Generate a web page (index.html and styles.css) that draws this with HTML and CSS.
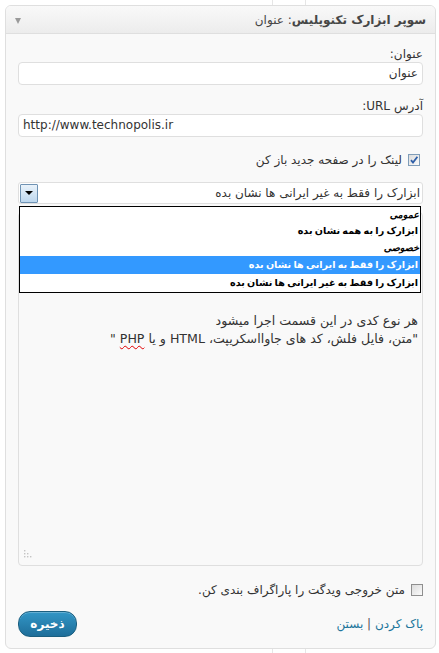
FILE: index.html
```html
<!DOCTYPE html>
<html lang="fa">
<head>
<meta charset="utf-8">
<title>سوپر ابزارک تکنوپلیس</title>
<link rel="stylesheet" href="styles.css">
</head>
<body>
<div class="widget" dir="rtl">
  <div class="widget-top">
    <h4 class="widget-title">سوپر ابزارک تکنوپلیس<span class="in-title">: عنوان</span></h4>
    <span class="toggle"></span>
  </div>
  <div class="widget-inside">
    <label class="field-label">عنوان:</label>
    <div class="text-input">عنوان</div>

    <label class="field-label second">آدرس URL:</label>
    <div class="text-input ltr" dir="ltr">http://www.technopolis.ir</div>

    <div class="check-row first-check">
      <span class="checkbox checked">
        <svg viewBox="0 0 10 10" width="10" height="10"><path d="M2 5.2 L4 7.6 L8.4 1.8" fill="none" stroke="#2f5fa8" stroke-width="1.8"/></svg>
      </span>
      <span class="check-label">لینک را در صفحه جدید باز کن</span>
    </div>

    <div class="select-wrap">
      <div class="select">
        <span class="select-value">ابزارک را فقط به غیر ایرانی ها نشان بده</span>
        <span class="select-btn"><span class="tri"></span></span>
      </div>
      <div class="dropdown">
        <div class="group">عمومی</div>
        <div class="option">ابزارک را به همه نشان بده</div>
        <div class="group g2">خصوصی</div>
        <div class="option selected">ابزارک را فقط به ایرانی ها نشان بده</div>
        <div class="option">ابزارک را فقط به غیر ایرانی ها نشان بده</div>
      </div>
    </div>

    <div class="textarea">
      <div class="ta-line">هر نوع کدی در این قسمت اجرا میشود</div>
      <div class="ta-line">"متن، فایل فلش، کد های جاوااسکریپت، HTML و یا <span class="spell">PHP</span> "</div>
      <svg class="grip" viewBox="0 0 10 10" width="10" height="10">
        <rect x="1" y="1" width="1.4" height="1.4" fill="#c4c4c4"/>
        <rect x="1" y="4" width="1.4" height="1.4" fill="#c4c4c4"/>
        <rect x="4" y="4" width="1.4" height="1.4" fill="#c4c4c4"/>
        <rect x="1" y="7" width="1.4" height="1.4" fill="#c4c4c4"/>
        <rect x="4" y="7" width="1.4" height="1.4" fill="#c4c4c4"/>
        <rect x="7" y="7" width="1.4" height="1.4" fill="#c4c4c4"/>
      </svg>
    </div>

    <div class="check-row second-check">
      <span class="checkbox"></span>
      <span class="check-label">متن خروجی ویدگت را پاراگراف بندی کن.</span>
    </div>

    <div class="footer">
      <div class="links"><a href="#">پاک کردن</a> <span class="sep">|</span> <a href="#">بستن</a></div>
      <button class="save">ذخیره</button>
    </div>
  </div>
</div>
</body>
</html>
```
FILE: styles.css
```css
html, body {
  margin: 0;
  padding: 0;
}
body {
  width: 439px;
  height: 653px;
  overflow: hidden;
  font-family: "DejaVu Sans", sans-serif;
  font-size: 12px;
  color: #333;
  background-color: #fff;
  background-image:
    linear-gradient(to right, transparent 272px, #e6e6e6 272px, #e6e6e6 273px, transparent 273px),
    linear-gradient(to right, transparent 305px, #e6e6e6 305px, #e6e6e6 306px, transparent 306px);
}
.widget {
  margin: 5px 0 0 5px;
  width: 431px;
  height: 644px;
  box-sizing: border-box;
  border: 1px solid #dfdfdf;
  border-radius: 6px;
  background: #f9f9f9;
}
.widget-top {
  height: 27px;
  display: flex;
  align-items: center;
  justify-content: space-between;
  padding: 0 9px 0 9px;
  background: linear-gradient(#f9f9f9, #ececec);
  border-bottom: 1px solid #dfdfdf;
  border-radius: 5px 5px 0 0;
}
.widget-title {
  margin: 0;
  font-size: 12px;
  font-weight: bold;
  color: #464646;
}
.in-title {
  font-weight: normal;
}
.toggle {
  width: 0;
  height: 0;
  border-left: 3.5px solid transparent;
  border-right: 3.5px solid transparent;
  border-top: 6px solid #9a9a9a;
  margin-top: 2px;
}
.widget-inside {
  padding: 0 12px;
}
.field-label {
  display: block;
  margin-top: 13px;
  height: 15px;
  line-height: 15px;
}
.field-label.second {
  margin-top: 14px;
}
.text-input {
  height: 23px;
  box-sizing: border-box;
  border: 1px solid #dfdfdf;
  border-radius: 4px;
  background: #fff;
  padding: 0 4px;
  line-height: 21px;
  font-size: 12px;
  color: #333;
}
.text-input.ltr {
  text-align: left;
}
.check-row {
  display: flex;
  align-items: center;
  height: 16px;
  line-height: 16px;
}
.first-check {
  margin-top: 15px;
}
.second-check {
  margin-top: 16px;
}
.checkbox {
  width: 12px;
  height: 12px;
  box-sizing: border-box;
  border: 1px solid #8f8f8f;
  background: linear-gradient(135deg, #dcdcdc, #fbfbfb);
  display: flex;
  align-items: center;
  justify-content: center;
  margin-left: 6px;
}
.checkbox.checked {
  border-color: #7f9db9;
}
.first-check .checkbox {
  margin-right: 3px;
}
.select-wrap {
  position: relative;
  margin-top: 14px;
}
.select {
  height: 22px;
  box-sizing: border-box;
  border: 1px solid #dfdfdf;
  border-radius: 3px;
  background: #fff;
  display: flex;
  align-items: center;
  justify-content: space-between;
  padding: 0 2px 0 1px;
}
.select-btn {
  width: 18px;
  height: 19px;
  box-sizing: border-box;
  border: 1px solid #6f93b4;
  border-radius: 1px;
  background: linear-gradient(#eaf3fb, #bdd7ee);
  display: flex;
  align-items: center;
  justify-content: center;
}
.tri {
  width: 0;
  height: 0;
  border-left: 4px solid transparent;
  border-right: 4px solid transparent;
  border-top: 4px solid #000;
}
.dropdown {
  position: absolute;
  top: 24px;
  left: 1px;
  right: 2px;
  border: 1px solid #000;
  background: #fff;
  font-size: 9.6px;
  font-weight: bold;
  word-spacing: -1px;
  color: #000;
  z-index: 2;
}
.group {
  height: 15px;
  line-height: 15px;
  font-style: italic;
  padding-right: 1px;
}
.group.g2 {
  height: 16px;
  line-height: 16px;
}
.option {
  height: 18px;
  line-height: 18px;
  padding-right: 2px;
}
.option:first-of-type {
  height: 17px;
}
.option.selected {
  background: #3399ff;
  color: #fff;
}
.textarea {
  position: relative;
  margin-top: 8px;
  height: 354px;
  box-sizing: border-box;
  border: 1px solid #dfdfdf;
  border-radius: 4px;
  background: #f9f9f9;
  padding: 99px 4px 0 4px;
  font-size: 12.6px;
  line-height: 18px;
  color: #333;
}
.spell {
  text-decoration: underline wavy #e00000;
  text-decoration-thickness: 1px;
  text-underline-offset: 2px;
}
.grip {
  position: absolute;
  left: 4px;
  bottom: 6px;
}
.footer {
  margin-top: 13px;
  display: flex;
  align-items: center;
  justify-content: space-between;
  height: 26px;
}
.links a {
  color: #21759b;
  text-decoration: none;
}
.sep {
  color: #555;
}
.save {
  width: 59px;
  height: 26px;
  border: 1px solid #1b5f80;
  border-radius: 12px;
  background: linear-gradient(#3296c6, #1e6e9a);
  color: #fff;
  font-family: "DejaVu Sans", sans-serif;
  font-size: 12px;
  font-weight: bold;
  padding: 0;
  box-shadow: inset 0 1px 0 rgba(255,255,255,0.25);
}
```
